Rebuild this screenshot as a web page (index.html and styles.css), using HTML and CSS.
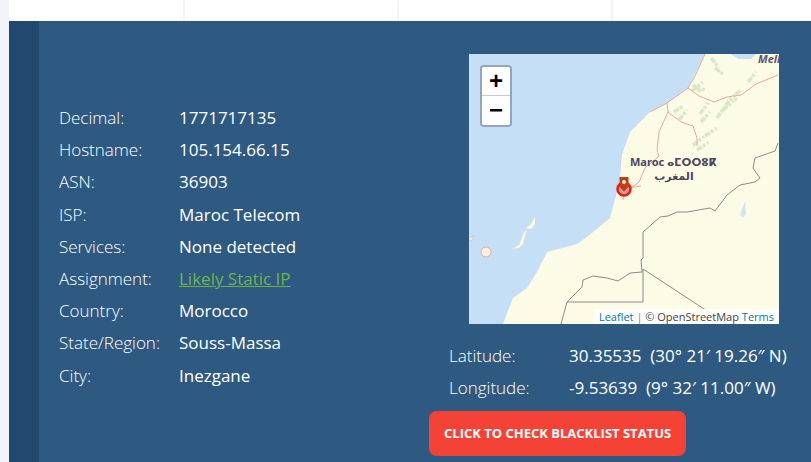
FILE: index.html
```html
<!DOCTYPE html>
<html lang="en">
<head>
    <meta charset="UTF-8">
    <meta name="viewport" content="width=device-width, initial-scale=1.0">
    <title>IP Details</title>
    <link rel="stylesheet" href="styles.css">
</head>
<body>
    <div class="top-strip">
        <div class="top-cell"></div>
        <div class="top-cell"></div>
        <div class="top-cell"></div>
        <div class="top-cell"></div>
    </div>

    <section class="ip-panel">
        <div class="details">
            <div class="row"><span class="label">Decimal:</span><span class="value">1771717135</span></div>
            <div class="row"><span class="label">Hostname:</span><span class="value">105.154.66.15</span></div>
            <div class="row"><span class="label">ASN:</span><span class="value">36903</span></div>
            <div class="row"><span class="label">ISP:</span><span class="value">Maroc Telecom</span></div>
            <div class="row"><span class="label">Services:</span><span class="value">None detected</span></div>
            <div class="row"><span class="label">Assignment:</span><a class="value static-link" href="#">Likely Static IP</a></div>
            <div class="row"><span class="label">Country:</span><span class="value">Morocco</span></div>
            <div class="row"><span class="label">State/Region:</span><span class="value">Souss-Massa</span></div>
            <div class="row"><span class="label">City:</span><span class="value">Inezgane</span></div>
        </div>

        <div class="location">
            <div class="map">
                <svg class="map-canvas" width="310" height="270" viewBox="0 0 310 270">
                    <rect width="310" height="270" fill="#c5dff6"/>
                    <!-- land -->
                    <path fill="#fcfbe6" d="M236 0 L219 34 L198 49 L181 58 L161 78 L153 101 L151 124 L148 138 L141 164 L118 183 L108 190 L78 198 L68 218 L58 234 L44 244 L34 270 L310 270 L310 0 L287 0 L282 5 L270 5 L261 0 Z"/>
                    <!-- forest, dashed so it reads as speckle -->
                    <g fill="none" stroke="#dbe8c6" stroke-width="3.5" stroke-dasharray="6 1 3 2 2 1">
                        <path d="M223 37 L234 28 M226 34 L236 36 M224 31 L232 38"/>
                        <path d="M205 58 L214 52 M210 66 L218 56"/>
                        <path d="M231 60 L240 48 M232 68 L241 58"/>
                        <path d="M248 64 L262 44 L272 36 M254 56 L268 44"/>
                        <path d="M224 91 L236 82 L248 74 M228 96 L240 88"/>
                        <path d="M279 28 L287 18"/>
                        <path d="M242 4 L250 14 M246 14 L254 20"/>
                    </g>
                    <!-- roads -->
                    <g fill="none" stroke="#eba99d" stroke-width="1">
                        <path d="M236 0 L226 22 L219 34 L198 49 L181 58"/>
                        <path d="M219 34 L230 42 L245 48 L258 43 L272 41 L287 30 L309 21"/>
                        <path d="M198 49 L199 58 L190 78 L188 96 L190 102 L176 114 L170 128 L162 134 L155 140"/>
                        <path d="M199 58 L212 68 L224 72 L228 84 L228 92"/>
                        <path d="M158 134 L172 132 M155 136 L154 146"/>
                    </g>
                    <!-- borders -->
                    <g fill="none" stroke="#8d8c86" stroke-width="1">
                        <path d="M309 89 L306 97 L286 104 L284 114 L291 124 L286 128 L271 131 L258 141 L246 157 L241 154 L218 158 L208 158 L199 162 L191 163 L174 178 L174 204 L172 206 L173 218 L161 219 L149 227 L138 224 L124 222 L114 226 L113 233 L98 248 L92 270"/>
                        <path d="M174 215 L174 248 L98 248"/>
                        <path d="M174 215 L258 270"/>
                    </g>
                    <!-- lake -->
                    <path fill="#d3e6ee" d="M274 152 L276 148 L277 160 L274 164 L271 161 Z"/>
                    <!-- canary islands -->
                    <path fill="#fcfbe6" stroke="#e3d9c4" stroke-width="0.5" d="M43 195 L50 191 L55 178 L58 175 L54 190 L50 194 Z"/>
                    <path fill="#fcfbe6" d="M57 174 L62 170 L66 163 L66 170 L62 175 Z"/>
                    <circle cx="17" cy="198" r="5" fill="#f6f1de" stroke="#e6a9a0" stroke-width="1"/>
                    <path fill="#f6f1de" stroke="#e6a9a0" stroke-width="0.5" d="M0 184 L5 182 L3 186 L0 187 Z"/>
                    <text class="map-city" x="289" y="9">Mell</text>
                    <text class="map-label" x="161" y="112">Maroc <tspan class="map-tifinagh">ⴰⵎⵔⵔⵓⴽ</tspan></text>
                    <text class="map-label" x="205" y="126" text-anchor="middle">المغرب</text>
                    <!-- marker -->
                    <circle cx="155" cy="135" r="6.5" fill="#f0908c" stroke="#ee1a10" stroke-width="2.5"/>
                    <path fill="#fff" opacity="0.55" d="M151 134 L159 134 L155 140 Z"/>
                    <path fill="#c63d0f" d="M150.5 123 L159.5 123 L159.5 133 L155 138 L150.5 133 Z"/>
                    <circle cx="155" cy="128" r="1.9" fill="#fff"/>
                </svg>
                <div class="zoom-control">
                    <a class="zoom-btn" href="#">+</a>
                    <a class="zoom-btn" href="#">−</a>
                </div>
                <div class="attribution"><a href="#">Leaflet</a> <span class="sep">|</span> © OpenStreetMap <a href="#">Terms</a></div>
            </div>

            <div class="coords">
                <div class="row"><span class="label">Latitude:</span><span class="value">30.35535&nbsp; (30° 21′ 19.26″ N)</span></div>
                <div class="row"><span class="label">Longitude:</span><span class="value">-9.53639&nbsp; (9° 32′ 11.00″ W)</span></div>
            </div>

            <a class="blacklist-btn" href="#">CLICK TO CHECK BLACKLIST STATUS</a>
        </div>
    </section>
</body>
</html>
```

FILE: styles.css
```css
/* General Body Styling */
html, body {
    height: 100%;
    overflow: hidden;
}

body {
    margin: 0;
    padding-left: 9px;
    background-color: #f2f4f7;
    color: #fff;
    font-family: 'Open Sans', sans-serif;
    font-size: 17px;
}

/* Top strip */
.top-strip {
    display: grid;
    grid-template-columns: 176px 214px 214px 1fr;
    height: 21px;
    background: #fff;
}

.top-cell {
    border-right: 2px solid #f2f4f7;
}

.top-cell:last-child {
    border-right: none;
}

/* Main panel */
.ip-panel {
    display: flex;
    height: 441px;
    box-sizing: border-box;
    background: #2e5a82;
    border-left: 30px solid #21496f;
    padding: 33px 0 0 20px;
}

.details {
    width: 370px;
    padding-top: 48px;
}

.row {
    display: flex;
    height: 32.2px;
    line-height: 32px;
}

.label {
    width: 120px;
    flex-shrink: 0;
    font-weight: 300;
}

.value {
    color: #fff;
}

.details .value {
    font-weight: 500;
}

.details .static-link {
    color: #6fb34e;
    font-weight: 400;
    text-decoration: underline;
}

/* Map */
.map {
    position: relative;
    width: 310px;
    height: 270px;
    margin-left: 40px;
    overflow: hidden;
}

.map-canvas {
    display: block;
}

.map-label {
    font-family: 'Noto Sans', 'DejaVu Sans', sans-serif;
    font-size: 11px;
    font-weight: bold;
    fill: #4c4560;
}

.map-tifinagh {
    font-size: 10.5px;
}

.map-city {
    font-family: 'Noto Sans', sans-serif;
    font-size: 11px;
    font-weight: bold;
    font-style: italic;
    fill: #5f5570;
}

.zoom-control {
    position: absolute;
    top: 11px;
    left: 11px;
    width: 28px;
    border: 2px solid rgba(0, 0, 0, 0.25);
    border-radius: 4px;
    background-clip: padding-box;
}

.zoom-btn {
    display: block;
    box-sizing: border-box;
    height: 29px;
    line-height: 27px;
    background: #fff;
    color: #000;
    font-family: 'Liberation Sans', sans-serif;
    font-size: 24px;
    font-weight: bold;
    text-align: center;
    text-decoration: none;
}

.zoom-btn:first-child {
    border-bottom: 1px solid #ccc;
    border-radius: 2px 2px 0 0;
}

.zoom-btn:last-child {
    border-radius: 0 0 2px 2px;
}

.attribution {
    position: absolute;
    right: 0;
    bottom: 0;
    padding: 0 5px;
    background: rgba(255, 255, 255, 0.8);
    color: #444;
    font-size: 11px;
    line-height: 15px;
}

.attribution a {
    color: #0078a8;
    text-decoration: none;
}

.sep {
    color: #888;
}

/* Coordinates */
.coords {
    margin: 16px 0 0 20px;
}

.coords .row {
    height: 32px;
}

/* Button */
.blacklist-btn {
    display: inline-block;
    margin-top: 7px;
    padding: 0 15px;
    height: 45px;
    line-height: 45px;
    background: #f44336;
    border-radius: 8px;
    color: #fff;
    font-size: 13px;
    font-weight: 700;
    text-decoration: none;
}
```
